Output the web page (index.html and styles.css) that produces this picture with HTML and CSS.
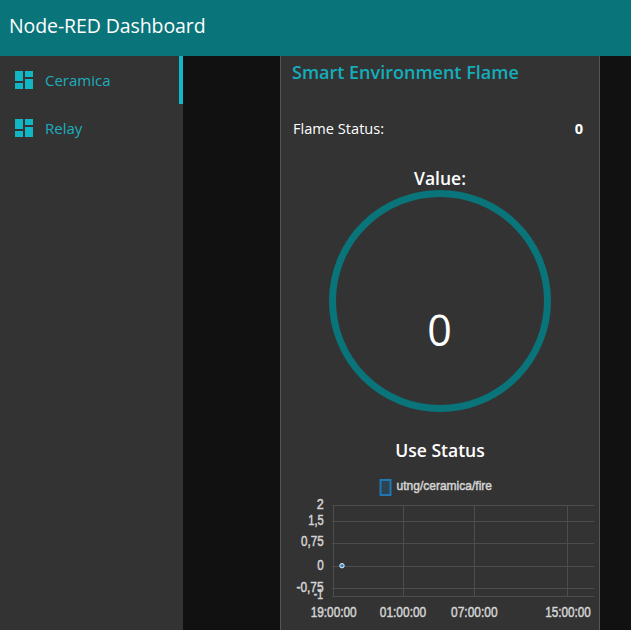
FILE: index.html
```html
<!DOCTYPE html>
<html lang="en">
<head>
    <meta charset="UTF-8">
    <meta name="viewport" content="width=device-width, initial-scale=1.0">
    <title>Node-RED Dashboard</title>
    <link rel="stylesheet" href="styles.css">
</head>
<body>

<header class="toolbar">Node-RED Dashboard</header>

<div class="main">
    <nav class="sidebar">
        <div class="nav-item active">
            <svg class="nav-icon" viewBox="0 0 18 18"><path d="M0 0h8v10H0zM0 12h8v6H0zM10 0h8v6h-8zM10 8h8v10h-8z"/></svg>
            <span>Ceramica</span>
        </div>
        <div class="nav-item">
            <svg class="nav-icon" viewBox="0 0 18 18"><path d="M0 0h8v10H0zM0 12h8v6H0zM10 0h8v6h-8zM10 8h8v10h-8z"/></svg>
            <span>Relay</span>
        </div>
    </nav>

    <div class="content">
        <section class="card">
            <h2 class="card-title">Smart Environment Flame</h2>

            <div class="status-row">
                <span>Flame Status:</span>
                <b>0</b>
            </div>

            <div class="gauge">
                <div class="gauge-label">Value:</div>
                <svg class="gauge-ring" width="222" height="222" viewBox="0 0 222 222">
                    <circle cx="111" cy="111" r="107.5" fill="none" stroke="#097479" stroke-width="7"/>
                </svg>
                <div class="gauge-value">0</div>
            </div>

            <div class="chart-title">Use Status</div>

            <svg class="chart" width="318" height="152" viewBox="0 0 318 152">
                <rect class="legend-box" x="99.500" y="9" width="10" height="15"/>
                <text class="legend-text" x="115.500" y="19" textLength="95.500" lengthAdjust="spacingAndGlyphs">utng/ceramica/fire</text>

                <g class="grid">
                    <line x1="51" y1="34.500" x2="313" y2="34.500"/>
                    <line x1="51" y1="50.500" x2="313" y2="50.500"/>
                    <line x1="51" y1="72.500" x2="313" y2="72.500"/>
                    <line x1="51" y1="95.500" x2="313" y2="95.500"/>
                    <line x1="51" y1="117.500" x2="313" y2="117.500"/>
                    <line x1="51" y1="125.500" x2="313" y2="125.500"/>
                    <line x1="52.500" y1="34" x2="52.500" y2="126"/>
                    <line x1="122.500" y1="34" x2="122.500" y2="126"/>
                    <line x1="193.500" y1="34" x2="193.500" y2="126"/>
                    <line x1="286.500" y1="34" x2="286.500" y2="126"/>
                </g>

                <g class="axis-y">
                    <text x="42.700" y="38" textLength="7" lengthAdjust="spacingAndGlyphs">2</text>
                    <text x="42.700" y="53.500" textLength="15.500" lengthAdjust="spacingAndGlyphs">1,5</text>
                    <text x="42.700" y="75" textLength="22.700" lengthAdjust="spacingAndGlyphs">0,75</text>
                    <text x="42.700" y="99" textLength="6.500" lengthAdjust="spacingAndGlyphs">0</text>
                    <text x="42.700" y="121" textLength="27.300" lengthAdjust="spacingAndGlyphs">-0,75</text>
                    <text x="42" y="128" textLength="9.300" lengthAdjust="spacingAndGlyphs">-1</text>
                </g>

                <g class="axis-x">
                    <text x="52.700" y="146" textLength="46" lengthAdjust="spacingAndGlyphs">19:00:00</text>
                    <text x="122" y="146" textLength="46.500" lengthAdjust="spacingAndGlyphs">01:00:00</text>
                    <text x="193.300" y="146" textLength="46.500" lengthAdjust="spacingAndGlyphs">07:00:00</text>
                    <text x="287" y="146" textLength="45.700" lengthAdjust="spacingAndGlyphs">15:00:00</text>
                </g>

                <circle class="point" cx="61" cy="94.700" r="2.200"/>
            </svg>
        </section>
    </div>
</div>

</body>
</html>
```

FILE: styles.css
```css
html, body {
    height: 100%;
}
body {
    margin: 0;
    height: 630px;
    overflow: hidden;
    background-color: #111111;
    font-family: 'Open Sans', 'Noto Sans', sans-serif;
    color: #eeeeee;
    display: flex;
    flex-direction: column;
}
.toolbar {
    height: 56px;
    flex: none;
    background-color: #097479;
    color: #ffffff;
    font-size: 19.5px;
    line-height: 52px;
    padding-left: 9px;
    letter-spacing: -0.1px;
}
.main {
    flex: 1;
    display: flex;
    min-height: 0;
}
.sidebar {
    width: 183px;
    flex: none;
    background-color: #333333;
}
.nav-item {
    height: 48px;
    box-sizing: border-box;
    display: flex;
    align-items: center;
    padding-left: 15px;
    color: #1badbd;
    font-size: 15px;
}
.nav-item.active {
    border-right: 4px solid #12b6c4;
}
.nav-icon {
    width: 18px;
    height: 18px;
    fill: #12b6c4;
    margin-right: 12px;
}
.content {
    flex: 1;
    padding-left: 97px;
}
.card {
    width: 320px;
    height: 574px;
    box-sizing: border-box;
    background-color: #333333;
    border-left: 1px solid #555555;
    border-right: 1px solid #555555;
}
.card-title {
    margin: 0;
    padding: 4px 0 0 11px;
    font-size: 18px;
    line-height: 24px;
    font-weight: 600;
    color: #14adbb;
}
.status-row {
    display: flex;
    justify-content: space-between;
    margin-top: 34px;
    padding: 0 16px 0 12px;
    font-size: 14.6px;
    line-height: 20px;
    color: #ffffff;
}
.gauge {
    position: relative;
    display: flex;
    flex-direction: column;
    align-items: center;
    margin-top: 29px;
}
.gauge-label {
    font-size: 17.5px;
    line-height: 22px;
    font-weight: 600;
    color: #ffffff;
}
.gauge-ring {
    display: block;
    margin-top: 1px;
    margin-right: 1px;
}
.gauge-value {
    position: absolute;
    top: 134px;
    left: 0;
    right: 1px;
    text-align: center;
    font-size: 43px;
    line-height: 58px;
    color: #ffffff;
}
.chart-title {
    margin-top: 26px;
    text-align: center;
    font-size: 17.5px;
    line-height: 24px;
    font-weight: 600;
    color: #ffffff;
}
.chart {
    display: block;
    margin-top: 9px;
}
.chart text {
    font-family: 'Liberation Sans', Arial, sans-serif;
    fill: #d4d4d4;
    stroke: #d4d4d4;
    stroke-width: 0.5px;
    font-size: 14.5px;
}
.chart .legend-text {
    font-size: 13.5px;
}
.legend-box {
    fill: #2f4252;
    stroke: #1f77b4;
    stroke-width: 2;
}
.grid line {
    stroke: #4d4d4d;
    stroke-width: 1;
}
.axis-y text {
    text-anchor: end;
}
.axis-x text {
    text-anchor: middle;
}
.point {
    fill: #2a8ad0;
    stroke: #f2f2f2;
    stroke-width: 1;
}
```
